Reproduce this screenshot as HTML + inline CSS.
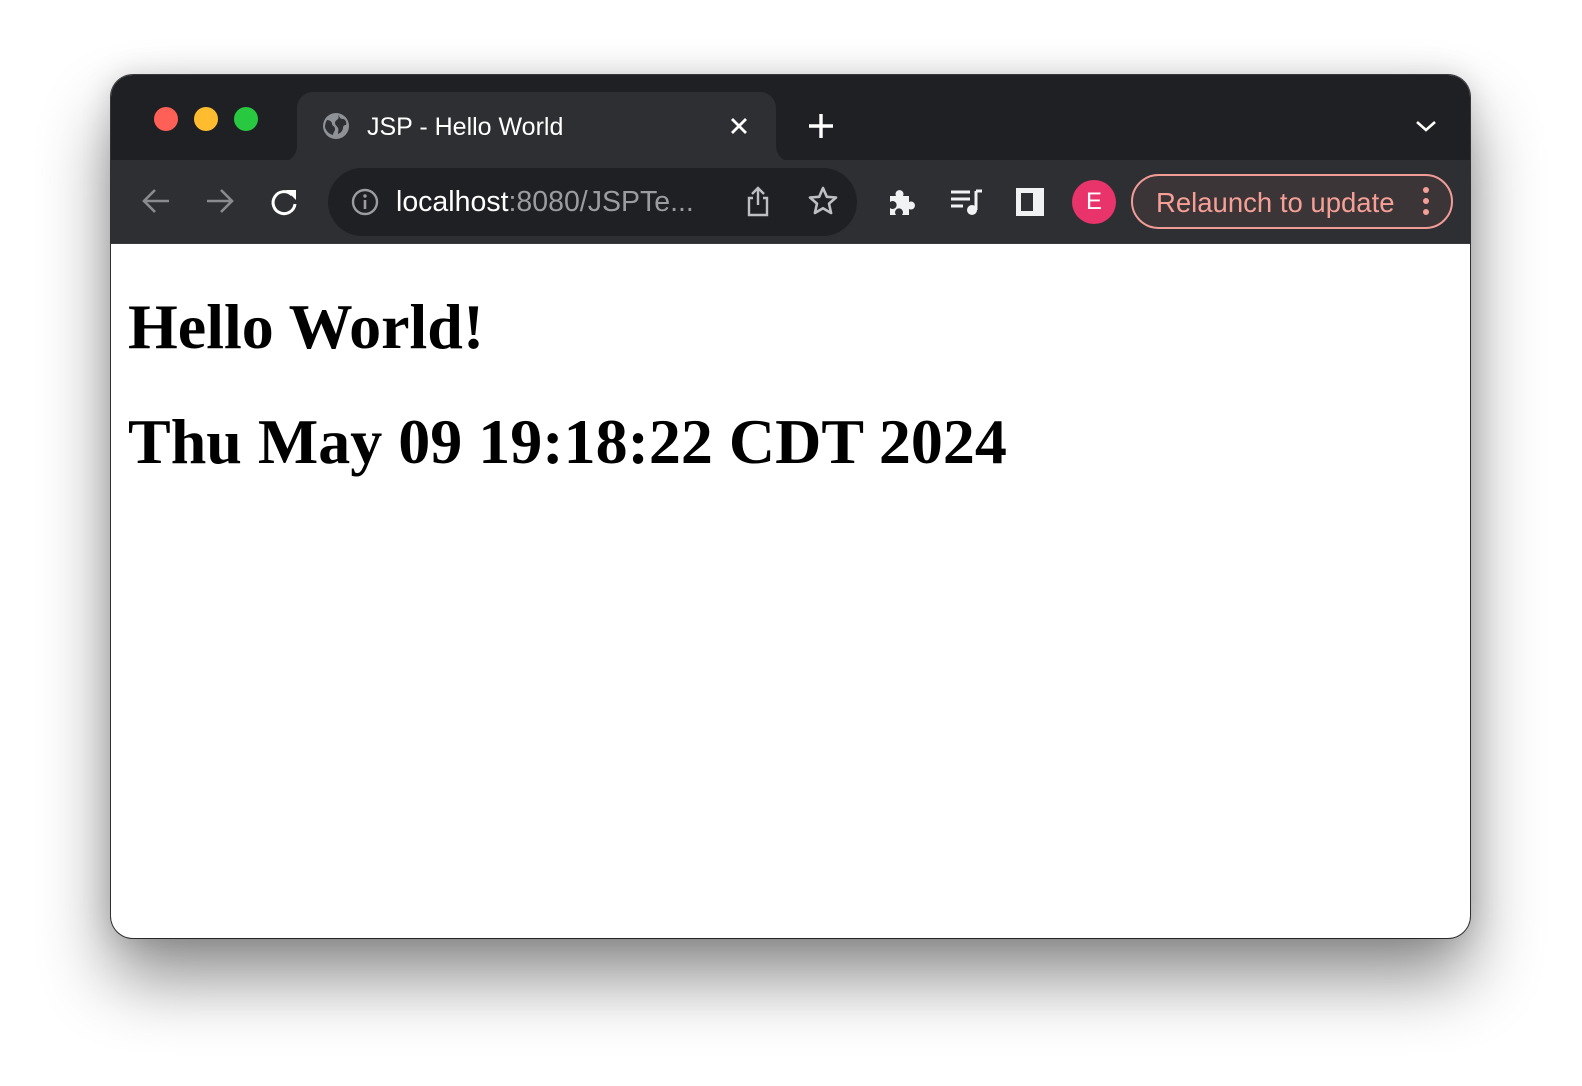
<!DOCTYPE html>
<html><head><meta charset="utf-8"><style>
*{margin:0;padding:0;box-sizing:border-box}
html,body{width:1582px;height:1086px;background:#fff;overflow:hidden;font-family:"Liberation Sans",sans-serif}
.win{position:absolute;left:111px;top:75px;width:1359px;height:863px;border-radius:22px;background:#fff;overflow:hidden;box-shadow:0 40px 70px rgba(0,0,0,.45),0 0 0 1px rgba(0,0,0,.75),0 0 30px rgba(0,0,0,.15)}
.title{position:absolute;left:0;top:0;width:100%;height:85px;background:#1f2023}
.tool{position:absolute;left:0;top:85px;width:100%;height:84px;background:#2e2f33;border-bottom:1px solid #3a3b3f}
.dot{position:absolute;top:32px;width:24px;height:24px;border-radius:50%}
.tab{position:absolute;left:186px;top:17px;width:479px;height:70px;background:#2e2f33;border-radius:16px 16px 0 0}
.tab:before,.tab:after{content:"";position:absolute;bottom:0;width:16px;height:16px;background:transparent}
.tab:before{left:-16px;border-bottom-right-radius:16px;box-shadow:6px 6px 0 6px #2e2f33}
.tab:after{right:-16px;border-bottom-left-radius:16px;box-shadow:-6px 6px 0 6px #2e2f33}
.t{position:absolute;color:#fff;white-space:nowrap}
.omni{position:absolute;left:217px;top:93px;width:529px;height:68px;border-radius:34px;background:#1f2023}
.btn{position:absolute;left:1020px;top:99px;width:322px;height:55px;border:2px solid #f19c96;border-radius:28px;background:#3b3537}
svg{position:absolute}
.content{position:absolute;left:17px;top:169px;color:#000;font-family:"Liberation Serif",serif;font-weight:bold;font-size:64px;white-space:nowrap}
</style></head><body>
<div class="win">
<div class="title"></div>
<div class="tool"></div>
<div class="dot" style="left:43px;background:#fe5f57"></div>
<div class="dot" style="left:83px;background:#febc2e"></div>
<div class="dot" style="left:123px;background:#28c840"></div>
<div class="tab"></div>
<svg style="left:211px;top:37px" width="28" height="28" viewBox="0 0 28 28"><circle cx="14" cy="14" r="13" fill="#8e9196"/><path d="M5 8c3 0 5 2 5 4s3 2 3 5-2 3-2 6c-4-1-7-4-8-8 0-3 1-5 2-7zM17 3c0 3 2 4 4 4s4 3 3 6c-2 0-3 1-3 3s-2 5-5 6c0-3 1-4 0-6s-3-3-3-5 2-3 3-4 0-3 1-4z" fill="#2e2f33"/></svg>
<div class="t" style="left:256px;top:38px;font-size:25px">JSP - Hello World</div>
<svg style="left:619px;top:42px" width="18" height="18" viewBox="0 0 18 18"><path d="M2 2L16 16M16 2L2 16" stroke="#fff" stroke-width="2.8"/></svg>
<svg style="left:697px;top:38px" width="26" height="26" viewBox="0 0 26 26"><path d="M13 1V25M1 13H25" stroke="#fff" stroke-width="3.4"/></svg>
<svg style="left:1304px;top:44px" width="22" height="14" viewBox="0 0 22 14"><path d="M2 3L11 11L20 3" stroke="#fff" stroke-width="2.6" fill="none"/></svg>
<svg style="left:30px;top:113px" width="30" height="26" viewBox="0 0 30 26"><path d="M28 13H3M14 2L3 13L14 24" stroke="#8a8b8f" stroke-width="2.6" fill="none"/></svg>
<svg style="left:94px;top:113px" width="30" height="26" viewBox="0 0 30 26"><path d="M2 13H27M16 2L27 13L16 24" stroke="#8a8b8f" stroke-width="2.6" fill="none"/></svg>
<svg style="left:158px;top:112px" width="30" height="30" viewBox="0 0 30 30"><path d="M23 8A11 11 0 1 0 26 17" stroke="#fff" stroke-width="3" fill="none"/><path d="M17 3H27V13z" fill="#fff"/></svg>
<div class="omni"></div>
<svg style="left:240px;top:113px" width="28" height="28" viewBox="0 0 28 28"><circle cx="14" cy="14" r="12" stroke="#9a9ca0" stroke-width="2.4" fill="none"/><path d="M14 12V21" stroke="#9a9ca0" stroke-width="2.6"/><circle cx="14" cy="8" r="1.7" fill="#9a9ca0"/></svg>
<div class="t" style="left:285px;top:111px;font-size:28.5px">localhost<span style="color:#9a9ca0">:8080/JSPTe...</span></div>
<svg style="left:634px;top:110px" width="26" height="32" viewBox="0 0 26 32"><path d="M8 13H4V30H22V13H18M13 20V3M7 9L13 3L19 9" stroke="#bdbfc3" stroke-width="2.4" fill="none"/></svg>
<svg style="left:697px;top:111px" width="30" height="30" viewBox="0 0 30 30"><path d="M15 2L18.8 10.8L28 11.5L21 17.6L23.1 27L15 22.2L6.9 27L9 17.6L2 11.5L11.2 10.8Z" stroke="#bdbfc3" stroke-width="2.6" fill="none" stroke-linejoin="round"/></svg>
<svg style="left:776px;top:112px" width="30" height="30" viewBox="0 0 30 30"><path d="M3 9H9A4 4 0 1 1 16 9H22V15A4 4 0 1 1 22 22V28H15A4 4 0 1 0 9 28H3V21A4 4 0 1 0 3 15Z" fill="#f1f2f4"/></svg>
<svg style="left:839px;top:113px" width="34" height="28" viewBox="0 0 34 28"><path d="M1 4H20M1 11H20M1 18H13" stroke="#f1f2f4" stroke-width="3"/><path d="M26 3V22" stroke="#f1f2f4" stroke-width="3"/><path d="M26 3H32" stroke="#f1f2f4" stroke-width="3"/><circle cx="22" cy="22" r="5" fill="#f1f2f4"/></svg>
<svg style="left:905px;top:113px" width="28" height="28" viewBox="0 0 28 28"><rect x="0" y="0" width="28" height="28" fill="#f1f2f4"/><rect x="5" y="5" width="12" height="18" fill="#2e2f33"/></svg>
<div style="position:absolute;left:961px;top:105px;width:44px;height:44px;border-radius:50%;background:#e8336b;color:#fff;font-size:24px;text-align:center;line-height:44px">E</div>
<div class="btn"></div>
<div class="t" style="left:1045px;top:112px;font-size:27.5px;color:#f59f97">Relaunch to update</div>
<svg style="left:1310px;top:111px" width="10" height="30" viewBox="0 0 10 30"><circle cx="5" cy="4" r="3" fill="#f59f97"/><circle cx="5" cy="15" r="3" fill="#f59f97"/><circle cx="5" cy="26" r="3" fill="#f59f97"/></svg>
<div class="content">
<div style="position:absolute;top:46px;left:0">Hello World!</div>
<div style="position:absolute;top:161px;left:0">Thu May 09 19:18:22 CDT 2024</div>
</div>
</div>
</body></html>
